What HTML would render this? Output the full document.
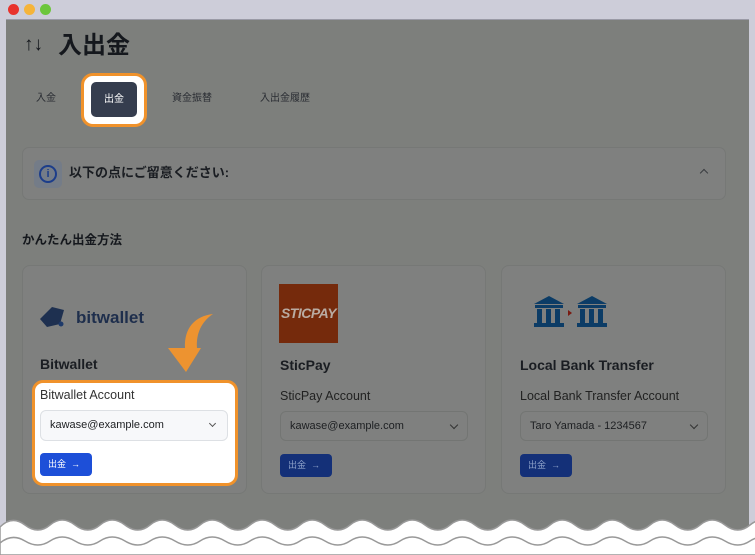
<!DOCTYPE html>
<html><head><meta charset="utf-8"><style>
*{margin:0;padding:0;box-sizing:border-box}
body{width:755px;height:555px;overflow:hidden;background:#fff;font-family:"Liberation Sans","Noto Sans CJK JP",sans-serif;position:relative}
.frame{position:absolute;left:0;top:0;width:755px;height:555px;background:#cdcdd9}
.dot{position:absolute;top:4px;width:11px;height:11px;border-radius:50%}
.content{position:absolute;left:6px;top:19px;width:743px;height:536px;background:#7d7f7c;border-top:1px solid #9a9aa6}
.abs{position:absolute}
.card{position:absolute;top:265px;width:225px;height:229px;border:1px solid #767876;border-radius:8px;background:#7f807f}
.title{font-size:14px;font-weight:bold;color:#1a1d22;position:absolute;left:18px;top:91px;line-height:16px}
.lbl{font-size:12.5px;color:#222;position:absolute;left:18px;top:123px;line-height:15px}
.sel{position:absolute;left:18px;top:145px;width:188px;height:30px;border:1px solid #737573;border-radius:6px;font-size:11px;color:#1d1f22;padding:0 9px;line-height:28px}
.sel:after{content:"";position:absolute;right:10px;top:10px;width:5px;height:5px;border-right:1.3px solid #333;border-bottom:1.3px solid #333;transform:rotate(45deg)}
.btn{position:absolute;left:18px;top:188px;width:52px;height:23px;border-radius:4px;background:#143078;color:#8da0c8;font-size:9px;padding:0 8px;line-height:23px}
</style></head><body>
<div class="frame"></div>
<div class="dot" style="left:8px;background:#e8322c"></div>
<div class="dot" style="left:24px;background:#f5b43a"></div>
<div class="dot" style="left:40px;background:#6cc63c"></div>
<div class="content"></div>
<div class="abs" style="left:24px;top:35px;font-size:19px;color:#15181d;font-weight:bold;line-height:20px">↑↓</div>
<div class="abs" style="left:58px;top:32px;font-size:24px;color:#15181d;font-weight:bold;line-height:28px">入出金</div>
<div class="abs" style="left:36px;top:93px;font-size:10px;color:#2a2d33;line-height:12px">入金</div>
<div class="abs" style="left:81px;top:73px;width:66px;height:54px;border:3px solid #f0922b;border-radius:12px;background:#fff"></div>
<div class="abs" style="left:91px;top:82px;width:46px;height:35px;background:#353d4e;border-radius:5px;color:#fff;font-size:10px;text-align:center;line-height:35px">出金</div>
<div class="abs" style="left:172px;top:93px;font-size:10px;color:#2a2d33;line-height:12px">資金振替</div>
<div class="abs" style="left:260px;top:93px;font-size:10px;color:#2a2d33;line-height:12px">入出金履歴</div>
<div class="abs" style="left:22px;top:147px;width:704px;height:53px;border:1px solid #767876;border-radius:7px;background:#7f807f"></div>
<div class="abs" style="left:34px;top:160px;width:28px;height:28px;border-radius:5px;background:#747c88"></div>
<div class="abs" style="left:39px;top:165px;width:18px;height:18px;border:2px solid #1c3d8a;border-radius:50%;color:#1c3d8a;font-size:11px;font-weight:bold;text-align:center;line-height:14px">i</div>
<div class="abs" style="left:69px;top:165px;font-size:13px;font-weight:bold;color:#1a1d22;line-height:16px">以下の点にご留意ください:</div>
<div class="abs" style="left:701px;top:170px;width:6px;height:6px;border-left:1.5px solid #3a3c40;border-top:1.5px solid #3a3c40;transform:rotate(45deg)"></div>
<div class="abs" style="left:22px;top:233px;font-size:12.5px;font-weight:bold;color:#15181d;line-height:15px">かんたん出金方法</div>

<div class="card" style="left:22px">
 <svg class="abs" style="left:16px;top:38px" width="110" height="26"><path d="M1 15 L13 3 L25 6 L21 20 L8 23 Z" fill="#1e3050"/><circle cx="22" cy="20" r="2.5" fill="#1e3a6a"/><text x="37" y="19" font-family="Liberation Sans" font-size="17" fill="#1e2e4c" font-weight="bold">bitwallet</text></svg>
</div>
<div class="card" style="left:261px">
 <div class="abs" style="left:17px;top:18px;width:59px;height:59px;background:#752a0c;color:#b9aba2;font-size:14px;font-weight:bold;font-style:italic;text-align:center;line-height:59px;letter-spacing:-0.5px">STICPAY</div>
 <div class="title">SticPay</div>
 <div class="lbl">SticPay Account</div>
 <div class="sel">kawase@example.com</div>
 <div class="btn">出金 &nbsp;→</div>
</div>
<div class="card" style="left:501px">
 <svg class="abs" style="left:32px;top:28px" width="76" height="36"><g fill="#0c3c66"><path d="M0 10 L15 2 L30 10 Z"/><rect x="1" y="11" width="28" height="3"/><rect x="3" y="15" width="5" height="14"/><rect x="12" y="15" width="5" height="14"/><rect x="21" y="15" width="5" height="14"/><rect x="0" y="29" width="30" height="4"/></g><path d="M34 16 L38 19 L34 22Z" fill="#7a1a10"/><g fill="#0c3c66" transform="translate(43,0)"><path d="M0 10 L15 2 L30 10 Z"/><rect x="1" y="11" width="28" height="3"/><rect x="3" y="15" width="5" height="14"/><rect x="12" y="15" width="5" height="14"/><rect x="21" y="15" width="5" height="14"/><rect x="0" y="29" width="30" height="4"/></g></svg>
 <div class="title">Local Bank Transfer</div>
 <div class="lbl">Local Bank Transfer Account</div>
 <div class="sel">Taro Yamada - 1234567</div>
 <div class="btn">出金 &nbsp;→</div>
</div>
<div class="abs" style="left:40px;top:356px;font-size:14px;font-weight:bold;color:#1a1d22;line-height:16px">Bitwallet</div>
<div class="abs" style="left:32px;top:380px;width:206px;height:106px;border:3px solid #f0922b;border-radius:11px;background:#fff"></div>
<div class="abs" style="left:40px;top:388px;font-size:12.5px;color:#333;line-height:15px">Bitwallet Account</div>
<div class="abs" style="left:40px;top:410px;width:188px;height:31px;border:1px solid #dde0e4;border-radius:6px;background:#f7f8fa;font-size:11px;color:#1d1f22;padding:0 9px;line-height:29px">kawase@example.com</div>
<div class="abs" style="left:210px;top:421px;width:5px;height:5px;border-right:1.3px solid #555;border-bottom:1.3px solid #555;transform:rotate(45deg)"></div>
<div class="abs" style="left:40px;top:453px;width:52px;height:23px;border-radius:4px;background:#1d4fd8;color:#fff;font-size:9px;padding:0 8px;line-height:23px">出金 &nbsp;→</div>
<svg class="abs" style="left:165px;top:312px" width="52" height="62"><path d="M48 2 C30 4 19 16 20 36 L3 36 L21 60 L36 36 L32 36 C31 22 36 10 48 2Z" fill="#ed9330"/></svg>
<svg class="abs" style="left:0;top:505px" width="755" height="50"><path d="M0 22 Q12 10 25 20 T50 20 T75 20 T100 20 T125 20 T150 20 T175 20 T200 20 T225 20 T250 20 T275 20 T300 20 T325 20 T350 20 T375 20 T400 20 T425 20 T450 20 T475 20 T500 20 T525 20 T550 20 T575 20 T600 20 T625 20 T650 20 T675 20 T700 20 T725 20 T750 20 T775 20 L755 50 L0 50Z" fill="#fff" stroke="#999" stroke-width="1.5"/><path d="M0 38 Q12 28 25 36 T50 36 T75 36 T100 36 T125 36 T150 36 T175 36 T200 36 T225 36 T250 36 T275 36 T300 36 T325 36 T350 36 T375 36 T400 36 T425 36 T450 36 T475 36 T500 36 T525 36 T550 36 T575 36 T600 36 T625 36 T650 36 T675 36 T700 36 T725 36 T750 36 T775 36 L755 50 L0 50Z" fill="#fff" stroke="#999" stroke-width="1.5"/></svg>
</body></html>
